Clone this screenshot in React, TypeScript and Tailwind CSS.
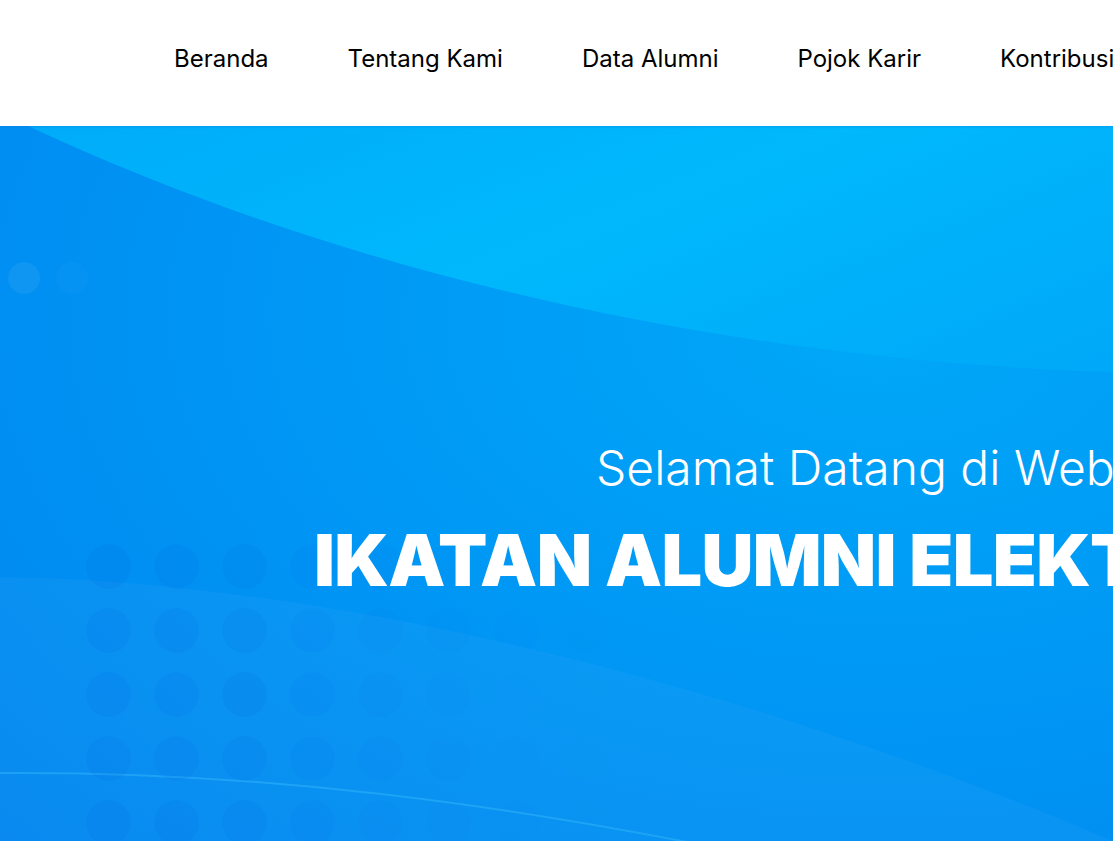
const navItems = ["Beranda", "Tentang Kami", "Data Alumni", "Pojok Karir", "Kontribusi"];

// fade of the dot pattern towards the right
const dotFade = [
  "opacity-100",
  "opacity-100",
  "opacity-90",
  "opacity-70",
  "opacity-45",
  "opacity-25",
  "opacity-10",
  "opacity-5",
];

function Navbar() {
  return (
    <header className="relative z-20 h-[126px] bg-white shadow-[0_1px_2px_rgba(0,120,220,0.35)]">
      <nav className="flex h-full items-center gap-[79px] pb-[8px] pl-[174px]">
        {navItems.map((item) => (
          <a key={item} href="#" className="whitespace-nowrap text-[24px] leading-[36px] text-black">
            {item}
          </a>
        ))}
      </nav>
    </header>
  );
}

function Waves() {
  return (
    <svg className="absolute left-0 top-0" width="1600" height="820" viewBox="0 0 1600 820" fill="none">
      <defs>
        <linearGradient id="topWave" x1="0" y1="0" x2="1" y2="0.4">
          <stop offset="0" stopColor="#00acf9" />
          <stop offset="0.45" stopColor="#00b8fc" />
          <stop offset="1" stopColor="#00a6f8" />
        </linearGradient>
      </defs>
      <path d="M28 0 C350 150 750 245 1200 248 L1600 250 L1600 0 Z" fill="url(#topWave)" />
      <path d="M0 451 C300 455 700 540 1113 715 C1250 775 1350 820 1400 820 L0 820 Z" fill="#ffffff" fillOpacity="0.035" />
      <path d="M0 647 C250 645 500 675 780 735" stroke="#2fb2fa" strokeOpacity="0.55" strokeWidth="2" />
    </svg>
  );
}

function DotGrid() {
  return (
    <div className="absolute left-[86px] top-[418px] grid grid-cols-[repeat(8,45px)] gap-x-[23px] gap-y-[19px]">
      {Array.from({ length: 5 }).map((_, r) =>
        dotFade.map((fade, c) => (
          <div key={`${r}-${c}`} className={`h-[45px] w-[45px] rounded-full bg-[#0062e0]/12 ${fade}`} />
        ))
      )}
    </div>
  );
}

function Hero() {
  return (
    <section className="relative h-[760px] overflow-hidden bg-[radial-gradient(ellipse_at_55%_25%,#00a8f8_0%,#0098f5_45%,#0084ef_100%)]">
      <Waves />
      <div className="absolute left-[8px] top-[136px] flex gap-4">
        <div className="h-8 w-8 rounded-full bg-white/6" />
        <div className="h-8 w-8 rounded-full bg-white/2" />
      </div>
      <DotGrid />

      <div className="relative z-10 flex flex-col items-start pt-[318px] text-white">
        <p className="ml-[596px] whitespace-nowrap text-[48px] font-light leading-[48px]">
          Selamat Datang di Website
        </p>
        <h1 className="ml-[314px] mt-8 whitespace-nowrap text-[72px] font-black leading-[72px] tracking-[-0.01em]">
          IKATAN ALUMNI ELEKTRO
        </h1>
      </div>
    </section>
  );
}

export default function App() {
  return (
    <div className="h-screen w-screen overflow-hidden bg-white font-['Inter','Noto_Sans',sans-serif]">
      <div className="w-[1600px]">
        <Navbar />
        <Hero />
      </div>
    </div>
  );
}
